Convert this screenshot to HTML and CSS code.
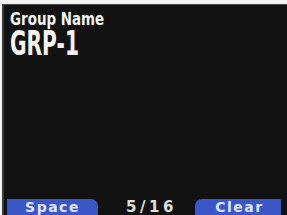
FILE: index.html
```html
<!DOCTYPE html>
<html>
<head>
<meta charset="utf-8">
<link rel="stylesheet" href="styles.css">
</head>
<body>
<div class="screen">
  <div class="header">
    <div class="label">Group Name</div>
    <div class="value">GRP-1</div>
  </div>
  <div class="bar">
    <div class="key key-left">Space</div>
    <div class="count">5/16</div>
    <div class="key key-right">Clear</div>
  </div>
</div>
</body>
</html>
```
FILE: styles.css
```css
html, body {
  margin: 0;
  padding: 0;
}
body {
  width: 287px;
  height: 215px;
  background: #f2f2f2;
  overflow: hidden;
}
.screen {
  margin: 4px 0 0 2px;
  height: 211px;
  background: #121212;
  border-top: 1px solid #4a4a4a;
  border-left: 2px solid #3a3a3a;
  box-sizing: border-box;
  display: flex;
  flex-direction: column;
}
.header {
  flex: 1;
  padding: 4px 0 0 6px;
  color: #f4f4f4;
  font-family: "DejaVu Sans Condensed", "DejaVu Sans", sans-serif;
  font-weight: bold;
}
.label {
  font-size: 18px;
  line-height: 19px;
  transform: scaleX(0.83);
  transform-origin: left center;
}
.value {
  font-size: 33px;
  line-height: 31px;
  transform: scaleX(0.68);
  transform-origin: left center;
}
.bar {
  height: 16px;
  display: flex;
  align-items: center;
  padding: 0 6px 0 3px;
  font-family: "DejaVu Sans", sans-serif;
  font-weight: bold;
  font-size: 13px;
  letter-spacing: 1.5px;
}
.key {
  width: 91px;
  height: 16px;
  background: #3b56c6;
  color: #dfe6f5;
  text-align: center;
  line-height: 16px;
  font-size: 14px;
}
.key-left {
  border-top-right-radius: 7px;
}
.key-right {
  width: 86px;
  padding-left: 3px;
  box-sizing: border-box;
  border-top-left-radius: 7px;
}
.count {
  flex: 1;
  padding-left: 10px;
  color: #e0e0e0;
  text-align: center;
  line-height: 16px;
  font-size: 15px;
  letter-spacing: 3.5px;
}
```
